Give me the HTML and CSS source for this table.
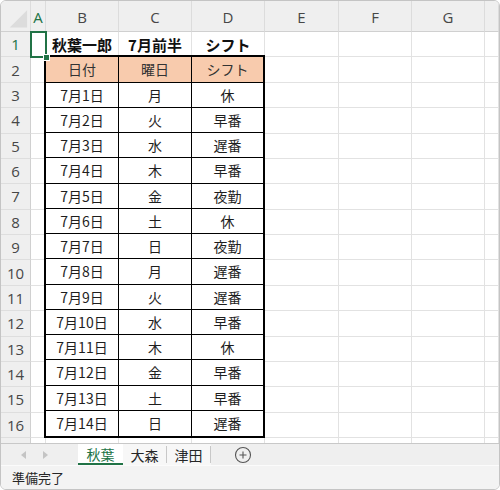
FILE: index.html
```html
<!DOCTYPE html>
<html lang="ja">
<head>
<meta charset="utf-8">
<link rel="stylesheet" href="styles.css">
</head>
<body>
<div class="frame">
  <div class="sheet">
    <div class="c hd corner"><svg width="30" height="30" viewBox="0 0 30 30"><polygon points="9,27 27,27 27,9" fill="#dcdcdc"/></svg></div>
    <div class="c hd sel-h">A</div>
    <div class="c hd">B</div>
    <div class="c hd">C</div>
    <div class="c hd">D</div>
    <div class="c hd">E</div>
    <div class="c hd">F</div>
    <div class="c hd">G</div>
    <div class="c hd"></div>

    <div class="c rh sel-h">1</div>
    <div class="c a1"><span class="sel"><span class="handle"></span></span></div>
    <div class="c b">秋葉一郎</div>
    <div class="c b">7月前半</div>
    <div class="c b">シフト</div>
    <div class="c"></div><div class="c"></div><div class="c"></div><div class="c"></div>

    <div class="c rh">2</div><div class="c"></div><div class="c"></div><div class="c"></div><div class="c"></div><div class="c"></div>
    <div class="c rh">3</div><div class="c"></div><div class="c"></div><div class="c"></div><div class="c"></div><div class="c"></div>
    <div class="c rh">4</div><div class="c"></div><div class="c"></div><div class="c"></div><div class="c"></div><div class="c"></div>
    <div class="c rh">5</div><div class="c"></div><div class="c"></div><div class="c"></div><div class="c"></div><div class="c"></div>
    <div class="c rh">6</div><div class="c"></div><div class="c"></div><div class="c"></div><div class="c"></div><div class="c"></div>
    <div class="c rh">7</div><div class="c"></div><div class="c"></div><div class="c"></div><div class="c"></div><div class="c"></div>
    <div class="c rh">8</div><div class="c"></div><div class="c"></div><div class="c"></div><div class="c"></div><div class="c"></div>
    <div class="c rh">9</div><div class="c"></div><div class="c"></div><div class="c"></div><div class="c"></div><div class="c"></div>
    <div class="c rh">10</div><div class="c"></div><div class="c"></div><div class="c"></div><div class="c"></div><div class="c"></div>
    <div class="c rh">11</div><div class="c"></div><div class="c"></div><div class="c"></div><div class="c"></div><div class="c"></div>
    <div class="c rh">12</div><div class="c"></div><div class="c"></div><div class="c"></div><div class="c"></div><div class="c"></div>
    <div class="c rh">13</div><div class="c"></div><div class="c"></div><div class="c"></div><div class="c"></div><div class="c"></div>
    <div class="c rh">14</div><div class="c"></div><div class="c"></div><div class="c"></div><div class="c"></div><div class="c"></div>
    <div class="c rh">15</div><div class="c"></div><div class="c"></div><div class="c"></div><div class="c"></div><div class="c"></div>
    <div class="c rh">16</div><div class="c"></div><div class="c"></div><div class="c"></div><div class="c"></div><div class="c"></div>

    <div class="c rh last"></div><div class="c last"></div><div class="c last"></div><div class="c last"></div><div class="c last"></div><div class="c last"></div><div class="c last"></div><div class="c last"></div><div class="c last"></div>

    <div class="table">
      <div class="t th">日付</div><div class="t th">曜日</div><div class="t th">シフト</div>
      <div class="t">7月1日</div><div class="t">月</div><div class="t">休</div>
      <div class="t">7月2日</div><div class="t">火</div><div class="t">早番</div>
      <div class="t">7月3日</div><div class="t">水</div><div class="t">遅番</div>
      <div class="t">7月4日</div><div class="t">木</div><div class="t">早番</div>
      <div class="t">7月5日</div><div class="t">金</div><div class="t">夜勤</div>
      <div class="t">7月6日</div><div class="t">土</div><div class="t">休</div>
      <div class="t">7月7日</div><div class="t">日</div><div class="t">夜勤</div>
      <div class="t">7月8日</div><div class="t">月</div><div class="t">遅番</div>
      <div class="t">7月9日</div><div class="t">火</div><div class="t">遅番</div>
      <div class="t">7月10日</div><div class="t">水</div><div class="t">早番</div>
      <div class="t">7月11日</div><div class="t">木</div><div class="t">休</div>
      <div class="t">7月12日</div><div class="t">金</div><div class="t">早番</div>
      <div class="t">7月13日</div><div class="t">土</div><div class="t">早番</div>
      <div class="t lastrow">7月14日</div><div class="t lastrow">日</div><div class="t lastrow">遅番</div>
    </div>
  </div>

  <div class="tabbar">
    <div class="nav">
      <svg width="8" height="10" viewBox="0 0 8 10"><polygon points="7,1 7,9 2,5" fill="#c4c4c4"/></svg>
      <svg width="8" height="10" viewBox="0 0 8 10"><polygon points="1,1 1,9 6,5" fill="#c4c4c4"/></svg>
    </div>
    <div class="tabs">
      <div class="tab active">秋葉</div>
      <div class="tab">大森</div>
      <div class="tab">津田</div>
    </div>
    <div class="add">
      <svg width="18" height="18" viewBox="0 0 18 18"><circle cx="9" cy="9" r="7.5" fill="none" stroke="#555" stroke-width="1.1"/><path d="M9 5.5v7M5.5 9h7" stroke="#555" stroke-width="1.1"/></svg>
    </div>
  </div>

  <div class="status">準備完了</div>
</div>
</body>
</html>
```

FILE: styles.css
```css
html, body {
  margin: 0;
  padding: 0;
  background: #ffffff;
}

.frame {
  width: 500px;
  height: 490px;
  box-sizing: border-box;
  border: 1px solid #c4c4c4;
  border-radius: 6px;
  overflow: hidden;
  display: flex;
  flex-direction: column;
  background: #ffffff;
  font-family: "Noto Sans CJK JP", "Noto Sans", sans-serif;
}

.sheet {
  flex: none;
  height: 442px;
  display: grid;
  grid-template-columns: 30px 15px 73px 73px 73px 74px 73px 73px 1fr;
  grid-template-rows: 31px repeat(16, 25.375px) 1fr;
  overflow: hidden;
}

.c {
  box-sizing: border-box;
  border-right: 1px solid #e2e2e2;
  border-bottom: 1px solid #e2e2e2;
  display: flex;
  align-items: center;
  justify-content: center;
  font-size: 14px;
  color: #1e1e1e;
  background: #ffffff;
  min-width: 0;
}

.c.last {
  border-bottom: none;
}

.hd {
  background: #efefef;
  border-bottom-color: #d0d0d0;
  border-right-color: #dcdcdc;
  color: #474747;
  font-family: "Open Sans", "Noto Sans", sans-serif;
  font-size: 15px;
  padding-top: 1px;
}

.corner {
  padding: 0;
  align-items: flex-end;
  justify-content: flex-end;
}

.corner svg {
  display: block;
}

.rh {
  background: #efefef;
  border-right-color: #d0d0d0;
  border-bottom-color: #dedede;
  color: #474747;
  font-family: "Open Sans", "Noto Sans", sans-serif;
  font-size: 15px;
}

.sel-h {
  color: #217346;
}

.b {
  font-weight: 700;
  font-size: 15px;
  color: #111111;
}

.a1 {
  position: relative;
  overflow: visible;
}

.sel {
  position: absolute;
  left: -1px;
  top: -1px;
  right: -2px;
  bottom: -2px;
  border: 2px solid #217346;
  z-index: 2;
}

.handle {
  position: absolute;
  right: -5px;
  bottom: -5px;
  width: 5px;
  height: 5px;
  background: #217346;
  border: 1px solid #ffffff;
}

.table {
  grid-column: 3 / span 3;
  grid-row: 3 / span 15;
  margin: -2px 0 0 -2px;
  border: 2px solid #000000;
  display: grid;
  grid-template-columns: 73px 73px 1fr;
  grid-template-rows: repeat(15, 1fr);
  background: #ffffff;
  z-index: 1;
}

.t {
  box-sizing: border-box;
  border-right: 1px solid #000000;
  border-bottom: 1px solid #000000;
  display: flex;
  align-items: center;
  justify-content: center;
  font-size: 14px;
  color: #1e1e1e;
}

.t:nth-child(3n) {
  border-right: none;
}

.t.lastrow {
  border-bottom: none;
}

.th {
  background: #f8cbad;
  color: #333333;
}

.tabbar {
  flex: none;
  height: 21px;
  border-top: 1px solid #c8c8c8;
  background: #efefef;
  display: flex;
  align-items: stretch;
}

.nav {
  width: 77px;
  display: flex;
  align-items: center;
  gap: 15px;
  padding-left: 18px;
  box-sizing: border-box;
}

.nav svg {
  display: block;
}

.tabs {
  display: flex;
  background: #f7f7f7;
}

.tab {
  width: 44px;
  display: flex;
  align-items: center;
  justify-content: center;
  font-size: 14px;
  color: #262626;
  border-right: 1px solid #c8c8c8;
  margin: 2px 0;
  box-sizing: border-box;
}

.tab.active {
  color: #217346;
  background: #ffffff;
  margin: 0;
  border-right: none;
  border-bottom: 2px solid #217346;
  width: 45px;
  padding-top: 1px;
}

.add {
  display: flex;
  align-items: center;
  padding-left: 23px;
}

.add svg {
  display: block;
}

.status {
  flex: 1;
  border-top: 1px solid #fbfbfb;
  background: #f3f3f3;
  font-size: 13px;
  color: #262626;
  display: flex;
  align-items: center;
  padding-left: 11px;
}
```
